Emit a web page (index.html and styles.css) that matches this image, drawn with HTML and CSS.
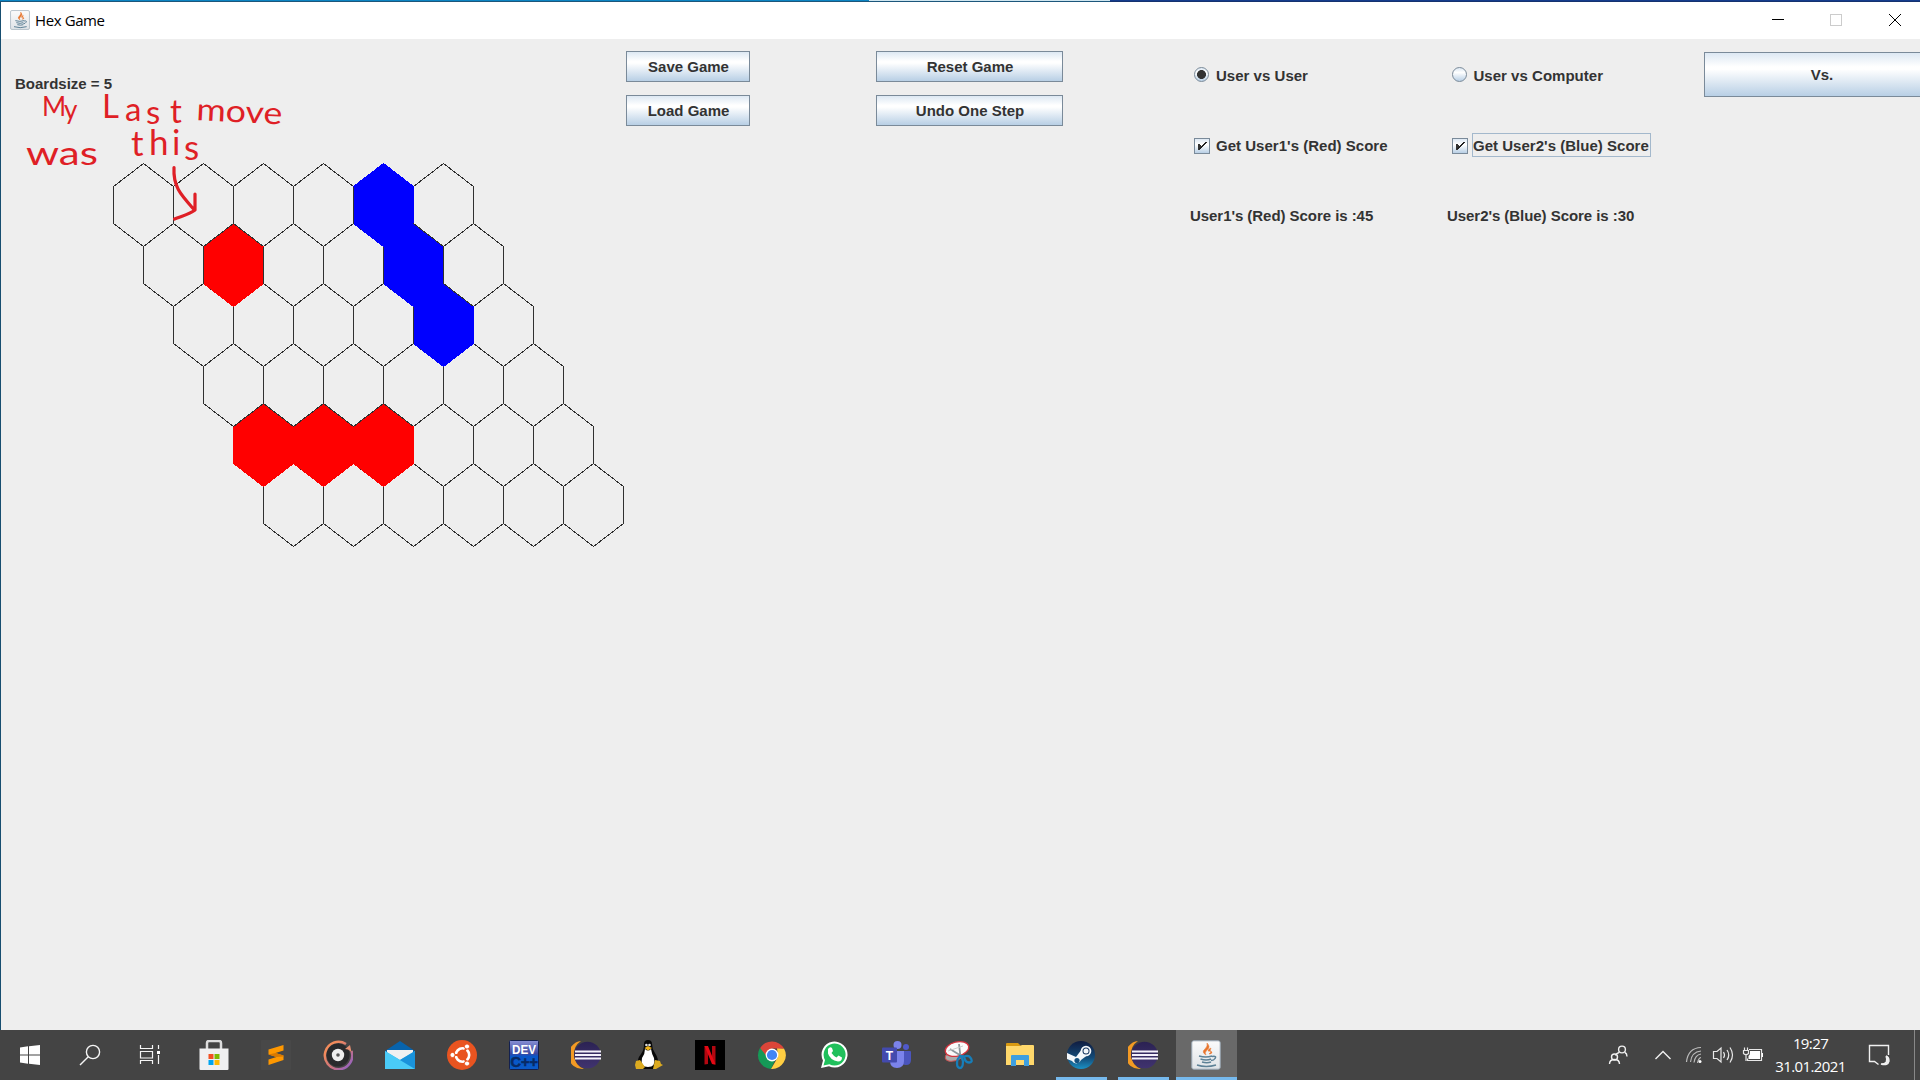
FILE: index.html
```html
<!DOCTYPE html>
<html lang="en">
<head>
<meta charset="utf-8">
<title>Hex Game</title>
<link rel="stylesheet" href="styles.css">
</head>
<body>
<div class="desktop-strip"><span class="strip-left"></span><span class="strip-mid"></span><span class="strip-right"></span></div>
<header class="titlebar">
  <svg class="app-icon" width="20" height="20" viewBox="0 0 30 30"><use href="#java"/></svg>
  <span class="title">Hex Game</span>
  <svg class="window-controls" width="150" height="37" viewBox="0 0 150 37" fill="none" shape-rendering="crispEdges">
    <path d="M2 17.500H14" stroke="#000"/>
    <rect x="60.500" y="12.500" width="11" height="11" stroke="#ccc"/>
    <path d="M119 12l12 12M131 12l-12 12" stroke="#000" shape-rendering="auto"/>
  </svg>
</header>
<main class="content">
  <section class="game">
    <p class="board-size">Boardsize = 5</p>
    <svg class="board" width="540" height="400" viewBox="100 155 540 400">
      <defs>
        <path id="hex" d="M30.500.5L60.500 23.500V60.500L30.500 83.500L.5 60.500V23.500Z"/>
        <g id="row"><use href="#hex"/><use href="#hex" x="60"/><use href="#hex" x="120"/><use href="#hex" x="180"/><use href="#hex" x="240"/><use href="#hex" x="300"/></g>
      </defs>
      <g class="cells">
        <use href="#row" x="113" y="163"/><use href="#row" x="143" y="223"/><use href="#row" x="173" y="283"/>
        <use href="#row" x="203" y="343"/><use href="#row" x="233" y="403"/><use href="#row" x="263" y="463"/>
      </g>
      <g class="red"><use href="#hex" x="203" y="223"/><use href="#hex" x="233" y="403"/><use href="#hex" x="293" y="403"/><use href="#hex" x="353" y="403"/></g>
      <g class="blue"><use href="#hex" x="353" y="163"/><use href="#hex" x="383" y="223"/><use href="#hex" x="413" y="283"/></g>
      <g class="edges">
        <path d="M203.500 246.500L233.500 223.500L263.500 246.500"/>
        <path d="M233.500 426.500l30-23 30 23 30-23 30 23 30-23 30 23"/>
        <path d="M353.500 186.500v37M383.500 246.500v37M413.500 306.500v37M413.500 223.500l30 23v37l30 23M203.500 246.500v37M263.500 246.500v37"/>
      </g>
    </svg>
    <svg class="ink" width="290" height="150" viewBox="0 80 290 150">
      <text x="42 64" y="116 119" font-size="26">My</text>
      <text x="102 125 146 170" y="118 121 124 123" font-size="33">Last</text>
      <text x="196" y="120" font-size="31" textLength="86" lengthAdjust="spacingAndGlyphs" transform="rotate(3 196 120)">move</text>
      <text x="26" y="165" font-size="33" textLength="72" lengthAdjust="spacingAndGlyphs">was</text>
      <text x="131 149 172 184" y="156 155 155 160" font-size="35">this</text>
      <path d="M174 167.500C173 187 181 195 194 209.500M195 194L195 210C190 214 182 216 174.500 219"/>
    </svg>
  </section>
  <section class="file-actions"><button>Save Game</button><button>Load Game</button></section>
  <section class="game-actions"><button>Reset Game</button><button>Undo One Step</button></section>
  <section class="player player-one">
    <label class="option"><span class="radio on"></span><span class="caption">User vs User</span></label>
    <label class="option"><span class="check"><svg width="16" height="16" viewBox="0 0 16 16"><use href="#tick"/></svg></span><span class="caption">Get User1's (Red) Score</span></label>
    <p class="score">User1's (Red) Score is :45</p>
  </section>
  <section class="player player-two">
    <label class="option"><span class="radio"></span><span class="caption">User vs Computer</span></label>
    <label class="option"><span class="check"><svg width="16" height="16" viewBox="0 0 16 16"><use href="#tick"/></svg></span><span class="caption focused">Get User2's (Blue) Score</span></label>
    <p class="score">User2's (Blue) Score is :30</p>
  </section>
  <button class="versus">Vs.</button>
</main>
<footer class="taskbar">
  <nav class="system">
    <svg width="60" height="50" viewBox="0 0 60 50" fill="#fff"><path d="M20 17.500l8-1.200V24.500H20zM29 16.200L40 15V24.500H29zM20 25.500h8V33.700L20 32.500zM29 25.500H40V35l-11-1.200z"/></svg>
    <svg width="60" height="50" viewBox="0 0 60 50" fill="none" stroke="#f5f5f5" stroke-width="1.400"><circle cx="33" cy="22" r="6.600"/><path d="M28.300 26.700L20 35"/></svg>
    <svg width="63" height="50" viewBox="0 0 63 50" fill="none" stroke="#f5f5f5" stroke-width="1.200"><path d="M20.500 15v3.500h12V15M20.500 34v-3.500h12V34M20.500 21.500h12v6.500h-12zM38.500 15v4M38.500 25v9"/><path d="M37 21h3v3h-3z" fill="#fff" stroke="none"/></svg>
  </nav>
  <nav class="apps">
    <span class="app"><svg viewBox="0 0 30 30"><path d="M8 10V3q0-2 2-2h10q2 0 2 2v7" fill="none" stroke="#ddd" stroke-width="2.500"/><path d="M.5 8.500h29V29q0 1-1 1h-27q-1 0-1-1z" fill="#f0f0f1"/><path d="M9.500 14h5v5h-5z" fill="#f25022"/><path d="M15.500 14h5v5h-5z" fill="#7fba00"/><path d="M9.500 20h5v5h-5z" fill="#00a4ef"/><path d="M15.500 20h5v5h-5z" fill="#ffb900"/></svg></span>
    <span class="app"><svg viewBox="0 0 30 30"><rect width="30" height="30" rx="1" fill="#484848"/><path d="M7.500 9.500L22.500 5v5.500l-8 2.500 8 2.500V20l-15 5v-5.500l8-2.500-8-2.500z" fill="#ff9800"/><path d="M7.500 14.500l7-1.500 8 2.500v1l-7 .5z" fill="#d97900"/></svg></span>
    <span class="app"><svg viewBox="0 0 30 30"><defs><linearGradient id="groove" x1="0" y1="0" x2="1" y2="1"><stop offset=".2" stop-color="#f28b5b"/><stop offset=".6" stop-color="#c9717f"/><stop offset="1" stop-color="#865fd5"/></linearGradient></defs><circle cx="15" cy="15" r="11.500" fill="#292a2c"/><path d="M23 4A13.700 13.700 0 1 0 28.500 11" fill="none" stroke="url(#groove)" stroke-width="2.500"/><path d="M22 9l5-4 1.500 7-3.500-2.500z" fill="#e58f72"/><circle cx="15" cy="15" r="6.200" fill="#eee"/><circle cx="15" cy="15" r="1.800" fill="#555"/></svg></span>
    <span class="app"><svg viewBox="0 0 30 30"><path d="M0 11L15 1l15 10-2 11H2z" fill="#0863ac"/><path d="M2 10h26v10H2z" fill="#f1f1f1"/><path d="M0 11l15 9 15-9v18H0z" fill="#36b7ef"/><path d="M0 11l30 18H0z" fill="#4acbf7"/><path d="M30 11v18L15 20z" fill="#1a93db"/></svg></span>
    <span class="app"><svg viewBox="0 0 30 30"><circle cx="15" cy="15" r="15" fill="#e95420"/><circle cx="15.500" cy="15" r="6.700" fill="none" stroke="#fff" stroke-width="2.600"/><path d="M15.500 15L4 15M15.500 15L21 5M15.500 15L21 25" stroke="#e95420" stroke-width="2"/><circle cx="15.500" cy="15" r="4.500" fill="#e95420"/><g fill="#fff" stroke="#e95420"><circle cx="5.500" cy="15" r="2.600"/><circle cx="20" cy="6.500" r="2.600"/><circle cx="20" cy="23.500" r="2.600"/></g></svg></span>
    <span class="app"><svg viewBox="0 0 30 30"><defs><linearGradient id="dev" x2="0" y2="1"><stop stop-color="#8991d6"/><stop offset=".45" stop-color="#3b48a0"/><stop offset=".55" stop-color="#0756c9"/><stop offset="1" stop-color="#0b5ac7"/></linearGradient></defs><rect x=".5" y=".5" width="29" height="29" rx="1" fill="url(#dev)" stroke="#13204e"/><text x="3" y="14" font-size="12.500" font-weight="700" fill="#fff" textLength="24" lengthAdjust="spacingAndGlyphs">DEV</text><text x="1.500" y="27" font-size="14" font-weight="700" fill="#082a65" stroke="#082a65" stroke-width=".5" textLength="27.500" lengthAdjust="spacingAndGlyphs">C++</text></svg></span>
    <span class="app"><svg viewBox="0 0 30 30"><use href="#eclipse"/></svg></span>
    <span class="app"><svg viewBox="0 0 30 30"><path d="M11 4q0-4 4-4t4 4q0 5 3 9 4 6 3 12l-4 4H9l-4-5q-1-5 3-10 3-4 3-10" fill="#080808"/><path d="M12 9q3 3 6 0 1 6 3 9 2 9-6 9t-6-9q3-4 3-9" fill="#fff"/><circle cx="13.400" cy="5" r="1.300" fill="#ddd"/><circle cx="16.500" cy="5" r="1.300" fill="#ddd"/><path d="M11.500 8l3.500-2 4 2-4 2.500z" fill="#efb51c"/><path d="M3 21l4-1 5 7-2 2H3l-1-4zM22 20l5 1 1 3 2 1-7 4h-3z" fill="#dcab20"/></svg></span>
    <span class="app"><svg viewBox="0 0 30 30"><path d="M0 0h30v30H0z" fill="#000"/><path d="M9.500 6h3.500v18l-3.500.5zM17 6h3.500v18.500L17 24z" fill="#b20710"/><path d="M9.500 6H13l7.500 18.500L17 24z" fill="#e50914"/></svg></span>
    <span class="app"><svg viewBox="0 0 30 30"><path d="M3 8A13.800 13.800 0 0 0 14 29l5-11-4-3z" fill="#159957"/><path d="M27 8.500A13.800 13.800 0 0 1 14 29l7-12-1-9z" fill="#ffce42"/><path d="M3.200 8A13.800 13.800 0 0 1 27 8.500H15l-6 7z" fill="#dc4539"/><circle cx="15" cy="15" r="6.400" fill="#fff"/><circle cx="15" cy="15" r="5.100" fill="#4285f4"/></svg></span>
    <span class="app"><svg viewBox="0 0 30 30"><path d="M2 28l2-7.500A13 13 0 1 1 10 26.300z" fill="#fff"/><path d="M4.500 25.500L6 20a11 11 0 1 1 4.400 4.300z" fill="#20c05c"/><path d="M9 9q2-3 4-1l1 3-1.500 2q2 3 5 4.500l2-2 3.500 2q0 4-4 4Q11 20 9 13.500z" fill="#fff"/></svg></span>
    <span class="app"><svg viewBox="0 0 30 30"><circle cx="25" cy="7" r="3" fill="#5059c9"/><path d="M20 11h9q1 0 1 1v8q0 5-5 5-4 0-5-3z" fill="#4b55bd"/><circle cx="16.500" cy="5" r="4" fill="#7b83eb"/><path d="M9 11h14v10q0 7-7 7t-7-7z" fill="#7b83eb"/><rect x="1" y="7.500" width="15" height="15" rx="1" fill="#434aae"/><text x="4.800" y="19.500" font-size="12" font-weight="700" fill="#fff">T</text></svg></span>
    <span class="app"><svg viewBox="0 0 30 30"><ellipse cx="11" cy="16" rx="9" ry="5" fill="#aaa" stroke="#c55" transform="rotate(-14 11 16)"/><ellipse cx="14" cy="9" rx="12" ry="7" fill="#fafafa" stroke="#d3343f" stroke-width="1.300" transform="rotate(-14 14 9)"/><path d="M7 9l13 8M16 4l1.500 13" stroke="#8d969b" stroke-width="1.800"/><path d="M5 11l15-5" stroke="#ccc"/><g fill="none" stroke="#177eb9" stroke-width="2.300"><path d="M16 16l5 .5q5-2 7 2t-2 4-5-6z"/><path d="M18 16l2 5q0 7-3 7t-3-5 4-7"/></g></svg></span>
    <span class="app"><svg viewBox="0 0 30 30"><path d="M1 4q0-1 1-1h11l3 3H1z" fill="#d99a12"/><path d="M1 6h14l2-1h11q1 0 1 1v19H1z" fill="#ffd86b"/><path d="M6 16q0-1 1-1h16q1 0 1 1v10h-5v-6h-8v6H6z" fill="#3e9fdf"/></svg></span>
    <span class="app running"><svg viewBox="0 0 30 30"><defs><linearGradient id="steam" x2="0" y2="1"><stop stop-color="#101c40"/><stop offset=".6" stop-color="#144b78"/><stop offset="1" stop-color="#1b91c5"/></linearGradient></defs><circle cx="15" cy="15" r="14" fill="url(#steam)"/><path d="M1 13l9 4 6-8 7 5-8 6a5 5 0 0 1-9 1l-5-2z" fill="#f4f7fa"/><circle cx="20" cy="11" r="5.300" fill="#f4f7fa"/><circle cx="20" cy="11" r="3.500" fill="#15355e"/><circle cx="20" cy="11" r="2.500" fill="#f4f7fa"/><circle cx="11" cy="20.500" r="2.600" fill="#15517f"/></svg></span>
    <span class="app running"><svg viewBox="0 0 30 30"><use href="#eclipse"/></svg></span>
    <span class="app running active"><svg viewBox="0 0 30 30"><use href="#java"/></svg></span>
  </nav>
  <aside class="tray">
    <svg class="people" width="90" height="50" viewBox="1600 1030 90 50" fill="none" stroke="#f0f0f0" stroke-width="1.400"><circle cx="1622" cy="1049.500" r="3.400"/><path d="M1619 1052.500q-3 1-3.500 3M1625 1052.500q2 1 2 4"/><circle cx="1614.500" cy="1057" r="3"/><path d="M1609.500 1064q0-4.500 5-4.500t5 4.500M1655.500 1059l7.500-7.500 7.500 7.500"/></svg>
    <svg width="80" height="50" viewBox="1684 1030 80 50" fill="none" stroke="#e8e8e8" stroke-width="1.200"><g stroke="#bdbdbd"><path d="M1686.500 1062Q1688 1048 1701 1047.500M1690.500 1062q1-10 10.500-11M1694 1062.500q1-7.500 7-8.500M1697.500 1063q1-5 3.500-5.500"/></g><circle cx="1700" cy="1061.500" r="1.500" fill="#fff" stroke="none"/><path d="M1713.500 1051.500h3.500l4-3.500v14l-4-3.500h-3.500z"/><path d="M1723.500 1052q2 3 0 6M1727 1050q3.500 5 0 10M1730 1047.500q5 7.500 0 15"/><path d="M1749 1049.500h12.500v11h-14v-2"/><path d="M1750 1051h10v8h-11.500v-3q1.500-1 1.500-3zM1762 1053h1v4h-1z" fill="#fff" stroke="none"/><path d="M1743.500 1050.500h5v3q-2.500 2.500-5 0zM1744.500 1047.500v3M1747.500 1047.500v3M1746 1055v6"/></svg>
    <div class="clock"><span>19:27</span><span>31.01.2021</span></div>
    <svg width="30" height="50" viewBox="1864 1030 30 50" fill="none" stroke="#f0f0f0" stroke-width="1.400"><path d="M1888.500 1055v-9.500h-19v16h5l4 3"/><path d="M1886 1056q3 8-5 8 7 2 8-3 0-4-3-5" fill="#eee"/></svg>
    <span class="show-desktop"></span>
  </aside>
</footer>
<svg class="symbols" width="0" height="0">
  <defs>
    <linearGradient id="cup" x2="0" y2="1"><stop stop-color="#fbfbfb"/><stop offset="1" stop-color="#dfe3e7"/></linearGradient>
    <linearGradient id="eclipse-fill" x2="0" y2="1"><stop stop-color="#2b2253"/><stop offset="1" stop-color="#40336f"/></linearGradient>
    <g id="java"><rect x=".8" y=".8" width="28.400" height="28.400" rx="2" fill="url(#cup)" stroke="#9aa9b5"/><path d="M15 15q-5-3-1-6 3-3 2-6 4 4 0 7-3 3-1 5M18 14q4-3-1-3 0-2 3-3-2 3 1 4 0 2-3 2" fill="#e8752d" stroke="#e8752d" stroke-width=".5"/><path d="M8 16q7 2 13 0M9.500 19q6 2 10.500 0M11 22q5 1.500 9 0M21 16.500q5-1 3 2-1 2-4 2M6 25q9 3 19 0" fill="none" stroke="#5d8196" stroke-width="1.500"/></g>
    <g id="eclipse"><path d="M10 1A14 14 0 0 0 13 29 16 16 0 0 1 10 1" fill="#f39a24"/><circle cx="16.500" cy="15" r="13.300" fill="url(#eclipse-fill)"/><path d="M4 11.500h26M4 15h26M4 18.500h26" stroke="#f4f2fa" stroke-width="1.900"/></g>
    <g id="tick" shape-rendering="crispEdges"><path d="M4 7h2v6H4zM6 8h1v4H6z" fill="#333"/><path d="M6 12l6-7" stroke="#222" stroke-width="1.600"/></g>
  </defs>
</svg>
</body>
</html>
```
FILE: styles.css
```css
* { box-sizing: border-box; }
body { margin: 0; width: 1920px; height: 1080px; overflow: hidden; display: flex; flex-direction: column; background: #eee; color: #333; font-family: "Liberation Sans", Arial, sans-serif; }
p { margin: 0; }
svg { display: block; flex: none; }
.symbols { position: absolute; }
.desktop-strip { height: 2px; display: flex; flex: none; }
.desktop-strip span { border-bottom: 1px solid #1c567b; }
.strip-left { width: 869px; background: #0c84c3; }
.strip-mid { width: 241px; background: #cfe6f0; }
.desktop-strip .strip-right { flex: 1; background: #143c8c; border-color: #15326f; }
.titlebar { height: 37px; flex: none; display: flex; align-items: center; background: #fff; border-left: 1px solid #174e70; padding-left: 9px; }
.app-icon { margin-top: -2px; }
.title { margin: -2px 0 0 5px; color: #000; font: 15px/20px "Open Sans", "Noto Sans", sans-serif; width: 90px; white-space: nowrap; letter-spacing: -.4px; }
.window-controls { margin-left: auto; }
.content { position: relative; height: 991px; flex: none; display: flex; align-items: flex-start; overflow: hidden; border-left: 1px solid #174e70; font-size: 15px; font-weight: 700; line-height: 18px; }
.game { width: 625px; flex: none; padding: 36px 0 0 14px; }
.board { margin: 62px 0 0 85px; }
.cells, .edges { fill: none; stroke: #303030; stroke-width: 1; shape-rendering: crispEdges; }
.red { fill: #f00; stroke: #f00; shape-rendering: crispEdges; }
.blue { fill: #00f; stroke: #00f; shape-rendering: crispEdges; }
.ink { position: absolute; left: -1px; top: 41px; font-family: Lato, sans-serif; font-weight: 400; fill: #df1f26; }
.ink path { fill: none; stroke: #df1f26; stroke-width: 3.2; stroke-linecap: round; stroke-linejoin: round; }
button { display: block; height: 31px; padding: 0 0 0 1px; border: 1px solid #7a8a99; border-radius: 0; background: linear-gradient(#dde8f3, #fff 32%, #fff 38%, #b8cfe5); color: #333; font: 700 15px/27px "Liberation Sans", Arial, sans-serif; }
.file-actions, .game-actions { display: flex; flex-direction: column; gap: 13px; padding-top: 12px; flex: none; }
.file-actions { width: 124px; }
.game-actions { width: 187px; margin-left: 126px; }
.player { display: flex; flex-direction: column; flex: none; width: 257px; padding-top: 25px; white-space: nowrap; }
.player-one { margin-left: 127px; }
.option { display: flex; align-items: center; height: 24px; padding-left: 4px; margin-bottom: 46px; }
.caption { margin: -2px 0 0 4px; padding: 3px 1px 1px; border: 1px solid transparent; letter-spacing: .02px; }
.focused { padding-left: .5px; border-color: #a3b8cc; }
.radio { width: 15px; height: 15px; margin: -3px 1px 0 0; border: 1px solid #7a8a99; border-radius: 50%; background: linear-gradient(#dde8f3, #fff 35%, #b8cfe5); }
.radio.on { background: radial-gradient(circle, #333 0 4.1px, transparent 4.8px), linear-gradient(#dde8f3, #fff 35%, #b8cfe5); }
.check { width: 16px; height: 16px; margin-top: -1px; border: 1px solid #7a8a99; background: linear-gradient(#dde8f3, #fff 40%, #b8cfe5); }
.check svg { margin: -2px -1px -1px; }
.player-two .radio, .player-two .check { margin-left: .5px; }
.score { margin-top: 3px; letter-spacing: -.05px; }
.versus { flex: none; width: 235px; height: 45px; margin-top: 13px; line-height: 43px; }
.taskbar { height: 50px; flex: none; display: flex; background: #444; }
.system, .apps, .tray { display: flex; flex: none; }
.apps { margin-left: -.5px; }
.app { width: 62px; height: 50px; display: flex; align-items: center; justify-content: center; }
.app svg { width: 30px; height: 30px; }
.running { border-bottom: 3px solid #76b9ed; width: 51px; margin: 0 6px 0 5px; padding-top: 3px; }
.active { width: 61px; margin: 0 0 0 1px; background: #696969; }
.active svg { margin-right: 1px; }
.tray { margin-left: auto; width: 320px; color: #fff; }
.people { margin-right: -6px; }
.clock { width: 93px; margin-right: 7px; display: flex; flex-direction: column; align-items: center; padding-top: 2px; font: 15px/23px "Open Sans", "Noto Sans", sans-serif; letter-spacing: -.6px; white-space: nowrap; }
.show-desktop { width: 6px; margin-left: auto; border-left: 1px solid #888; }
```
